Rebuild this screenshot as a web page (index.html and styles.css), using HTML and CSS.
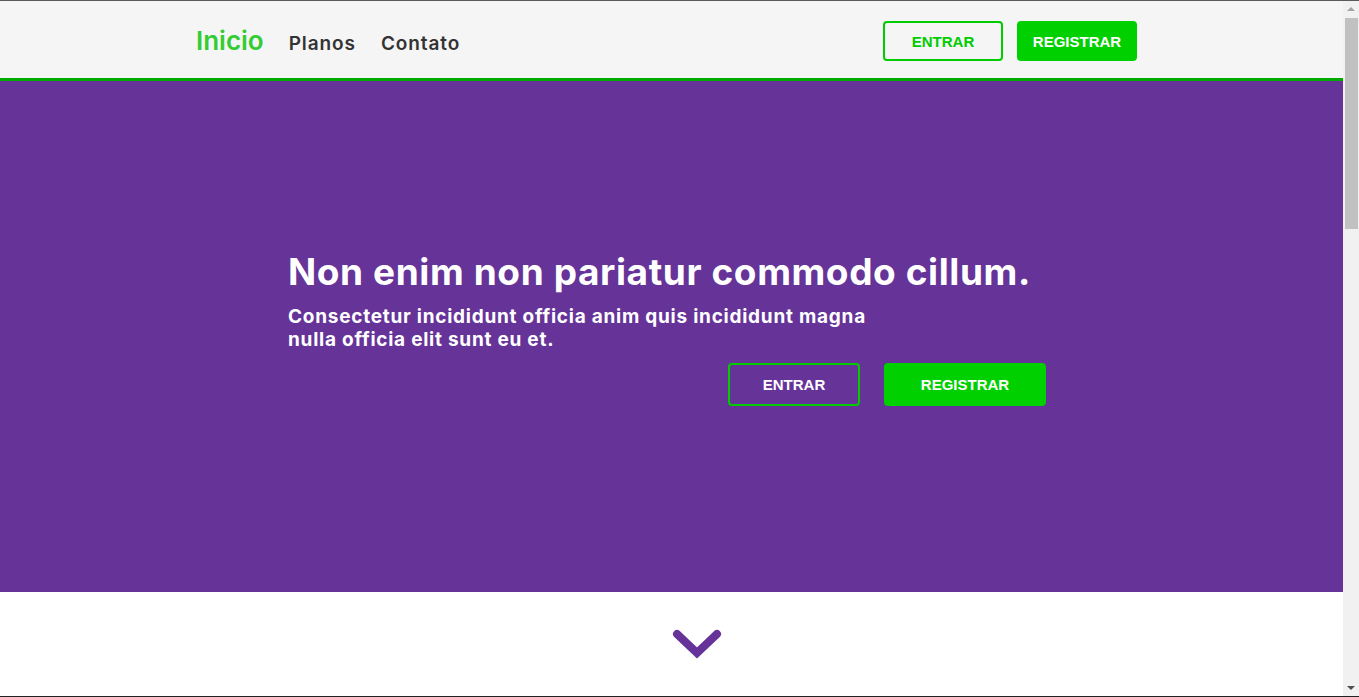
FILE: index.html
```html
<!DOCTYPE html>
<html lang="pt">
<head>
<meta charset="utf-8">
<title>Inicio</title>
<link rel="stylesheet" href="styles.css">
</head>
<body>
<div class="frame">
  <div class="page">
    <header class="topbar">
      <div class="topbar-inner">
        <nav class="nav">
          <a class="nav-link nav-home" href="#">Inicio</a>
          <a class="nav-link" href="#">Planos</a>
          <a class="nav-link" href="#">Contato</a>
        </nav>
        <div class="actions">
          <a class="btn btn-outline btn-sm" href="#">ENTRAR</a>
          <a class="btn btn-solid btn-sm" href="#">REGISTRAR</a>
        </div>
      </div>
    </header>
    <section class="hero">
      <div class="hero-inner">
        <h1 class="hero-title">Non enim non pariatur commodo cillum.</h1>
        <p class="hero-sub">Consectetur incididunt officia anim quis incididunt magna nulla officia elit sunt eu et.</p>
        <div class="hero-actions">
          <a class="btn btn-outline btn-lg btn-light" href="#">ENTRAR</a>
          <a class="btn btn-solid btn-lg btn-wide" href="#">REGISTRAR</a>
        </div>
      </div>
    </section>
    <section class="below">
      <svg class="chevron" width="54" height="36" viewBox="0 0 54 36">
        <polyline points="7,7 27,26 47,7" fill="none" stroke="#663399" stroke-width="8" stroke-linecap="round" stroke-linejoin="miter"/>
      </svg>
    </section>
  </div>
  <div class="scrollbar">
    <div class="sb-arrow sb-up"></div>
    <div class="sb-track"><div class="sb-thumb"></div></div>
    <div class="sb-arrow sb-down"></div>
  </div>
</div>
</body>
</html>
```
FILE: styles.css
```css
* { box-sizing: border-box; }
html, body { margin: 0; padding: 0; height: 100%; overflow: hidden; }
body {
  font-family: "Inter", "Roboto", sans-serif;
  background: #fff;
}
.frame {
  display: flex;
  height: 697px;
  border-top: 1px solid #5a5a5a;
  border-bottom: 1px solid #222;
}
.page {
  flex: 1;
  display: flex;
  flex-direction: column;
  overflow: hidden;
}
.topbar {
  background: #f5f5f5;
  border-bottom: 3px solid #00aa00;
  height: 80px;
  flex: none;
}
.topbar-inner {
  width: 941px;
  margin-left: 196px;
  height: 77px;
  display: flex;
  align-items: center;
  justify-content: space-between;
}
.nav { display: flex; align-items: baseline; gap: 25px; padding-top: 2px; }
.nav-link {
  text-decoration: none;
  color: #333;
  font-weight: 600;
  font-size: 19px;
  letter-spacing: 0.9px;
}
.nav-home { color: #33cc33; font-size: 26px; font-weight: 600; letter-spacing: 0px; }
.actions { display: flex; gap: 14px; margin-top: 3px; }
.btn {
  display: flex;
  align-items: center;
  justify-content: center;
  text-decoration: none;
  font-family: "Liberation Sans", Arial, sans-serif;
  font-weight: 700;
  font-size: 15px;
  border-radius: 4px;
}
.btn-sm { width: 120px; height: 40px; }
.btn-outline { border: 2px solid #00cc00; color: #00cc00; background: transparent; }
.btn-solid { background: #00d000; color: #fff; border: 2px solid #00d000; }
.btn-lg { height: 43px; width: 132px; }
.btn-wide { width: 162px; }
.btn-light { color: #fff; }
.hero {
  background: #663399;
  height: 511px;
  flex: none;
  display: flex;
  align-items: center;
}
.hero-inner {
  width: 758px;
  margin-left: 288px;
  color: #fff;
  padding-bottom: 18px;
}
.hero-title {
  margin: 0;
  font-size: 37px;
  font-weight: 700;
  letter-spacing: 0.6px;
  line-height: 44px;
}
.hero-sub {
  margin: 11px 0 0;
  width: 600px;
  font-size: 19px;
  font-weight: 700;
  letter-spacing: 0.75px;
  line-height: 23px;
}
.hero-actions {
  display: flex;
  justify-content: flex-end;
  gap: 24px;
  margin-top: 12px;
}
.below {
  flex: 1;
  display: flex;
  justify-content: center;
  padding-top: 35px;
  padding-left: 50px;
}
.chevron { display: block; }
.scrollbar {
  width: 16px;
  flex: none;
  background: #f1f1f1;
  display: flex;
  flex-direction: column;
  align-items: center;
}
.sb-arrow { width: 0; height: 0; border-left: 4px solid transparent; border-right: 4px solid transparent; margin: 6px 0; }
.sb-up { border-bottom: 4px solid #a3a3a3; }
.sb-down { border-top: 4px solid #505050; }
.sb-track { flex: 1; width: 100%; display: flex; justify-content: center; }
.sb-thumb { width: 13px; height: 211px; margin-top: 1px; background: #c1c1c1; }
```
